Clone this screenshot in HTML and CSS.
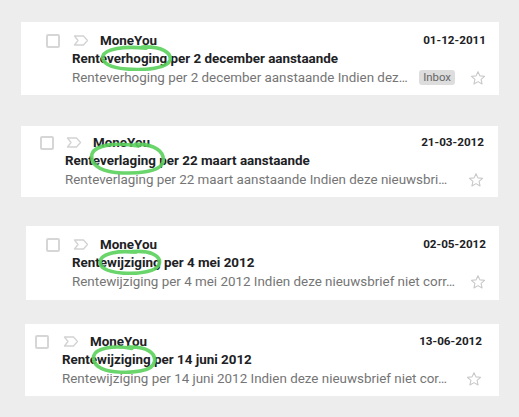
FILE: index.html
```html
<!DOCTYPE html>
<html lang="nl">

<head>
	<meta charset="UTF-8">
	<meta name="viewport" content="width=device-width, initial-scale=1.0">
	<title>MoneYou</title>
	<link rel="stylesheet" href="styles.css">
</head>

<body>
	<div class="list">
		<div class="mail mail-1">
			<span class="check"></span>
			<div class="main">
				<div class="top">
					<svg class="marker" width="16" height="11" viewBox="0 0 16 11"><path d="M1.5 1h9l4 4.5-4 4.5h-9l3.5-4.5z" fill="none" stroke="#d2d2d2" stroke-width="1.3" stroke-linejoin="round"/></svg>
					<span class="sender">MoneYou</span>
					<span class="date">01-12-2011</span>
				</div>
				<div class="subject">Renteverhoging per 2 december aanstaande</div>
				<div class="bottom">
					<span class="snippet">Renteverhoging per 2 december aanstaande Indien dez…</span>
					<span class="label">Inbox</span>
					<svg class="star" width="16" height="16" viewBox="0 0 24 24"><path d="M12 2.5l2.9 6.3 6.9.7-5.2 4.6 1.5 6.8L12 17.4l-6.1 3.5 1.5-6.8-5.2-4.6 6.9-.7z" fill="none" stroke="#c8c8c8" stroke-width="1.6" stroke-linejoin="round"/></svg>
				</div>
			</div>
			<svg class="circle" viewBox="0 0 100 40" preserveAspectRatio="none"><path d="M58 3C84 2 98 11 96 23 93 36 62 39 36 37 13 35 2 27 4 17 7 6 33 1 63 5" vector-effect="non-scaling-stroke"/></svg>
		</div>

		<div class="mail mail-2">
			<span class="check"></span>
			<div class="main">
				<div class="top">
					<svg class="marker" width="16" height="11" viewBox="0 0 16 11"><path d="M1.5 1h9l4 4.5-4 4.5h-9l3.5-4.5z" fill="none" stroke="#d2d2d2" stroke-width="1.3" stroke-linejoin="round"/></svg>
					<span class="sender">MoneYou</span>
					<span class="date">21-03-2012</span>
				</div>
				<div class="subject">Renteverlaging per 22 maart aanstaande</div>
				<div class="bottom">
					<span class="snippet">Renteverlaging per 22 maart aanstaande Indien deze nieuwsbri…</span>
					<svg class="star" width="16" height="16" viewBox="0 0 24 24"><path d="M12 2.5l2.9 6.3 6.9.7-5.2 4.6 1.5 6.8L12 17.4l-6.1 3.5 1.5-6.8-5.2-4.6 6.9-.7z" fill="none" stroke="#c8c8c8" stroke-width="1.6" stroke-linejoin="round"/></svg>
				</div>
			</div>
			<svg class="circle" viewBox="0 0 100 40" preserveAspectRatio="none"><path d="M60 4C86 3 99 13 96 25 92 37 60 39 34 37 12 35 1 26 4 15 8 5 34 1 64 6" vector-effect="non-scaling-stroke"/></svg>
		</div>

		<div class="mail mail-3">
			<span class="check"></span>
			<div class="main">
				<div class="top">
					<svg class="marker" width="16" height="11" viewBox="0 0 16 11"><path d="M1.5 1h9l4 4.5-4 4.5h-9l3.5-4.5z" fill="none" stroke="#d2d2d2" stroke-width="1.3" stroke-linejoin="round"/></svg>
					<span class="sender">MoneYou</span>
					<span class="date">02-05-2012</span>
				</div>
				<div class="subject">Rentewijziging per 4 mei 2012</div>
				<div class="bottom">
					<span class="snippet">Rentewijziging per 4 mei 2012 Indien deze nieuwsbrief niet corr…</span>
					<svg class="star" width="16" height="16" viewBox="0 0 24 24"><path d="M12 2.5l2.9 6.3 6.9.7-5.2 4.6 1.5 6.8L12 17.4l-6.1 3.5 1.5-6.8-5.2-4.6 6.9-.7z" fill="none" stroke="#c8c8c8" stroke-width="1.6" stroke-linejoin="round"/></svg>
				</div>
			</div>
			<svg class="circle" viewBox="0 0 100 40" preserveAspectRatio="none"><path d="M55 4C82 2 98 10 96 22 94 35 64 39 38 37 14 35 3 28 5 18 8 7 32 2 60 5" vector-effect="non-scaling-stroke"/></svg>
		</div>

		<div class="mail mail-4">
			<span class="check"></span>
			<div class="main">
				<div class="top">
					<svg class="marker" width="16" height="11" viewBox="0 0 16 11"><path d="M1.5 1h9l4 4.5-4 4.5h-9l3.5-4.5z" fill="none" stroke="#d2d2d2" stroke-width="1.3" stroke-linejoin="round"/></svg>
					<span class="sender">MoneYou</span>
					<span class="date">13-06-2012</span>
				</div>
				<div class="subject">Rentewijziging per 14 juni 2012</div>
				<div class="bottom">
					<span class="snippet">Rentewijziging per 14 juni 2012 Indien deze nieuwsbrief niet cor…</span>
					<svg class="star" width="16" height="16" viewBox="0 0 24 24"><path d="M12 2.5l2.9 6.3 6.9.7-5.2 4.6 1.5 6.8L12 17.4l-6.1 3.5 1.5-6.8-5.2-4.6 6.9-.7z" fill="none" stroke="#c8c8c8" stroke-width="1.6" stroke-linejoin="round"/></svg>
				</div>
			</div>
			<svg class="circle" viewBox="0 0 100 40" preserveAspectRatio="none"><path d="M57 4C84 3 99 12 96 24 93 37 62 39 36 37 13 35 2 27 4 16 7 6 33 1 62 6" vector-effect="non-scaling-stroke"/></svg>
		</div>
	</div>
</body>

</html>
```

FILE: styles.css
```css
body {
	margin: 0;
	background-color: #ededed;
	font-family: Roboto, "Liberation Sans", sans-serif;
	font-size: 13.4px;
	color: #222;
}

.list {
	display: flex;
	flex-direction: column;
	padding-top: 22px;
}

.mail {
	position: relative;
	display: flex;
	background-color: white;
	box-sizing: border-box;
}

.mail-1 {
	margin-left: 21px;
	width: 478px;
	height: 73px;
	padding: 9px 13px 0 25px;
}

.mail-2 {
	margin-top: 31px;
	margin-left: 21px;
	width: 477px;
	height: 71px;
	padding: 7px 14px 0 19px;
}

.mail-3 {
	margin-top: 29px;
	margin-left: 26px;
	width: 473px;
	height: 74px;
	padding: 9px 13px 0 20px;
}

.mail-4 {
	margin-top: 24px;
	margin-left: 25px;
	width: 474px;
	height: 72px;
	padding: 8px 17px 0 10px;
}

.check {
	flex: none;
	width: 10px;
	height: 10px;
	margin: 3px 12px 0 0;
	border: 2px solid #d6d6d6;
	border-radius: 2px;
}

.mail-2 .check {
	margin-right: 11px;
}

.mail-4 .check {
	margin-right: 13px;
}

.main {
	flex: 1;
	display: flex;
	flex-direction: column;
	min-width: 0;
}

.top,
.bottom {
	display: flex;
	align-items: center;
	height: 18px;
}

.marker {
	flex: none;
	margin: 0 11px 0 1px;
}

.sender {
	font-weight: bold;
	color: #202124;
}

.date {
	margin-left: auto;
	font-size: 11.7px;
	font-weight: bold;
	color: #202124;
}

.subject {
	height: 19px;
	line-height: 19px;
	font-weight: bold;
	color: #202124;
}

.bottom {
	height: 19px;
}

.snippet {
	flex: 1;
	color: #757575;
	white-space: nowrap;
}

.label {
	padding: 0 4px;
	line-height: 15px;
	border-radius: 3px;
	background-color: #dddddd;
	color: #666;
	font-size: 11.4px;
	margin-right: 15px;
}

.star {
	flex: none;
}

.circle {
	position: absolute;
	fill: none;
	stroke: #5ad15c;
	stroke-width: 3.6px;
	stroke-linecap: round;
	opacity: 0.9;
}

.mail-1 .circle {
	left: 79px;
	top: 23px;
	width: 73px;
	height: 26px;
}

.mail-2 .circle {
	left: 68px;
	top: 15px;
	width: 77px;
	height: 34px;
}

.mail-3 .circle {
	left: 71px;
	top: 23px;
	width: 65px;
	height: 26px;
}

.mail-4 .circle {
	left: 66px;
	top: 20px;
	width: 66px;
	height: 30px;
}
```
